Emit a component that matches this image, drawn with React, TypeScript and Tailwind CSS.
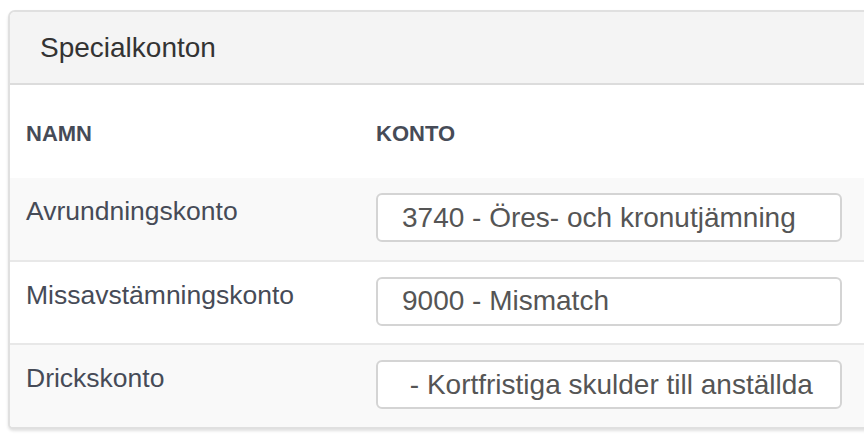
const rows = [
  { name: 'Avrundningskonto', account: '3740 - Öres- och kronutjämning', striped: true },
  { name: 'Missavstämningskonto', account: '9000 - Mismatch', striped: false },
  { name: 'Drickskonto', account: '\u00a0- Kortfristiga skulder till anställda', striped: true },
];

export default function App() {
  return (
    <div className="h-[447px] w-full overflow-hidden bg-white pl-2 pt-[10px] font-['Liberation_Sans',Arial,sans-serif]">
      <section className="w-[880px] overflow-hidden rounded-tl-[7px] rounded-bl-[5px] border-2 border-[#e0e0e0] bg-white shadow-[0_2px_3px_rgba(0,0,0,0.12)]">
        <div className="flex h-[73px] items-center border-b-2 border-[#dcdcdc] bg-[#f4f4f4] pl-[30px]">
          <h2 className="text-[28px] leading-8 text-[#333]">Specialkonton</h2>
        </div>
        <div className="flex h-[93px] items-center pt-[5px] text-[22px] font-bold leading-7 text-[#464b57]">
          <div className="w-[366px] pl-[16px]">NAMN</div>
          <div>KONTO</div>
        </div>
        {rows.map((row, index) => (
          <div
            key={row.name}
            className={`flex ${index === 0 ? 'h-[82px]' : 'border-t-2 border-[#e8e8e8]'} ${index === 1 ? 'h-[83px]' : ''} ${
              index === 2 ? 'h-[84px]' : ''
            } ${row.striped ? 'bg-[#f9f9f9]' : 'bg-white'}`}
          >
            <div className="w-[366px] self-start pl-[16px] pt-[17px] text-[26.5px] leading-8 text-[#464b57]">{row.name}</div>
            <div className="flex items-center pb-[3px]">
              <div className="flex h-[49px] w-[466px] items-center overflow-hidden whitespace-nowrap rounded-[6px] border-2 border-[#d4d4d4] bg-white pl-[24px] text-[28px] text-[#555]">
                {row.account}
              </div>
            </div>
          </div>
        ))}
      </section>
    </div>
  );
}
